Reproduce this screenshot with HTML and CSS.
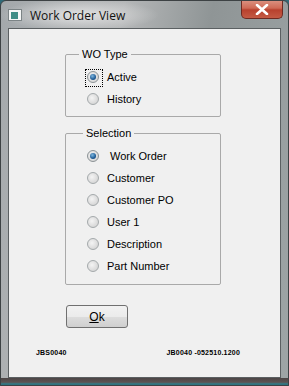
FILE: index.html
```html
<!DOCTYPE html>
<html lang="en">
<head>
  <meta charset="UTF-8">
  <meta name="viewport" content="width=device-width, initial-scale=1.0">
  <title>Work Order View</title>
  <link rel="stylesheet" href="styles.css">
</head>
<body>
  <div class="window">
    <div class="titlebar">
      <span class="app-icon"><span class="app-icon-inner"></span></span>
      <span class="title">Work Order View</span>
      <span class="close-btn">
        <svg width="14" height="11" viewBox="0 0 14 11">
          <path d="M2 1 L12 10 M12 1 L2 10" stroke="#fff" stroke-width="2.6" stroke-linecap="round"/>
        </svg>
      </span>
    </div>

    <div class="client">
      <fieldset class="group group-type">
        <legend>WO Type</legend>
        <label class="option">
          <span class="radio checked focused"><span class="radio-dot"></span></span>
          <span>Active</span>
        </label>
        <label class="option">
          <span class="radio"></span>
          <span>History</span>
        </label>
      </fieldset>

      <fieldset class="group group-selection">
        <legend>Selection</legend>
        <label class="option">
          <span class="radio checked"><span class="radio-dot"></span></span>
          <span class="indent">Work Order</span>
        </label>
        <label class="option"><span class="radio"></span><span>Customer</span></label>
        <label class="option"><span class="radio"></span><span>Customer PO</span></label>
        <label class="option"><span class="radio"></span><span>User 1</span></label>
        <label class="option"><span class="radio"></span><span>Description</span></label>
        <label class="option"><span class="radio"></span><span>Part Number</span></label>
      </fieldset>

      <button class="ok-btn"><u>O</u>k</button>

      <div class="footer">
        <span>JBS0040</span>
        <span>JB0040 -052510.1200</span>
      </div>
    </div>

    <div class="frame-bottom"></div>
  </div>
</body>
</html>
```

FILE: styles.css
```css
body {
  margin: 0;
  font-family: "Liberation Sans", Arial, sans-serif;
  background: #2f6a78;
}
.window {
  width: 289px;
  height: 386px;
  display: flex;
  flex-direction: column;
  box-sizing: border-box;
  border: 1px solid #3d4244;
  border-radius: 6px 6px 0 0;
  background: linear-gradient(100deg, #a3a8ab 0%, #b5b7b8 35%, #8f9596 60%, #9ea5a6 100%);
  overflow: hidden;
}
.titlebar {
  height: 27px;
  display: flex;
  align-items: center;
  position: relative;
  background: radial-gradient(ellipse 80px 16px at 78px 14px, rgba(235,235,235,0.85), rgba(235,235,235,0) 100%);
}
.app-icon {
  width: 14px;
  height: 12px;
  margin-left: 7px;
  margin-top: 1px;
  background: #f4f6f6;
  border: 1px solid #7c8486;
  display: flex;
  align-items: center;
  padding-left: 2px;
  box-sizing: border-box;
}
.app-icon-inner {
  width: 7px;
  height: 7px;
  background: #3e8d86;
}
.title {
  margin-left: 8px;
  margin-top: 1px;
  font-family: "Open Sans", "DejaVu Sans", sans-serif;
  font-size: 12px;
  color: #111;
}
.close-btn {
  position: absolute;
  top: -1px;
  right: 5px;
  width: 42px;
  height: 19px;
  box-sizing: border-box;
  border: 1px solid #6e2a22;
  border-top: none;
  border-radius: 0 0 5px 5px;
  background: linear-gradient(#dc9484 0%, #cf6a56 45%, #b8412e 55%, #c45a44 100%);
  display: flex;
  align-items: center;
  justify-content: center;
}
.client {
  flex: 1;
  margin: 0 7px;
  background: #f0f0f0;
  border: 1px solid #5b6062;
  padding-left: 56px;
  display: flex;
  flex-direction: column;
  align-items: flex-start;
  font-size: 11px;
  color: #000;
}
.group {
  width: 156px;
  box-sizing: border-box;
  margin: 0;
  padding: 5px 0 0 0;
  border: 1px solid #a9a9a9;
  border-radius: 2px;
}
.group legend {
  padding: 0 3px;
  line-height: 14px;
}
.group-type legend {
  margin-left: 13px;
}
.group-selection legend {
  margin-left: 17px;
}
.group-type {
  margin-top: 18px;
  height: 70px;
}
.group-selection {
  margin-top: 9px;
  height: 159px;
}
.option {
  display: flex;
  align-items: center;
  height: 22px;
  margin-left: 21px;
}
.option > span:last-child {
  margin-left: 8px;
}
.indent {
  padding-left: 3px;
}
.radio {
  width: 12px;
  height: 12px;
  box-sizing: border-box;
  border-radius: 50%;
  border: 1px solid #a4a9ab;
  background: radial-gradient(circle at 40% 40%, #f4f4f4 0%, #d8d8d8 70%, #cacaca 100%);
  display: flex;
  align-items: center;
  justify-content: center;
  position: relative;
}
.radio.checked {
  border-color: #8c9396;
}
.radio-dot {
  width: 6px;
  height: 6px;
  border-radius: 50%;
  background: radial-gradient(circle at 40% 35%, #7fb8e0 0%, #1e5b95 60%, #143f6a 100%);
}
.radio.focused::after {
  content: "";
  position: absolute;
  left: -3px;
  top: -3px;
  width: 16px;
  height: 16px;
  border: 1px dotted #000;
}
.ok-btn {
  margin-top: 20px;
  margin-left: 1px;
  width: 62px;
  height: 23px;
  border: 1px solid #707070;
  border-radius: 3px;
  background: linear-gradient(#f2f2f2 0%, #ebebeb 50%, #dddddd 51%, #cfcfcf 100%);
  font-family: "Liberation Sans", Arial, sans-serif;
  font-size: 12px;
  color: #000;
  padding: 0;
}
.footer {
  margin-top: 21px;
  margin-left: -29px;
  width: 204px;
  display: flex;
  justify-content: space-between;
  font-size: 7px;
  font-weight: bold;
  letter-spacing: 0.2px;
}
.frame-bottom {
  height: 7px;
  background: linear-gradient(#4b4545 0%, #5d5353 60%, #2f7c88 85%, #2f6a78 100%);
}
```
